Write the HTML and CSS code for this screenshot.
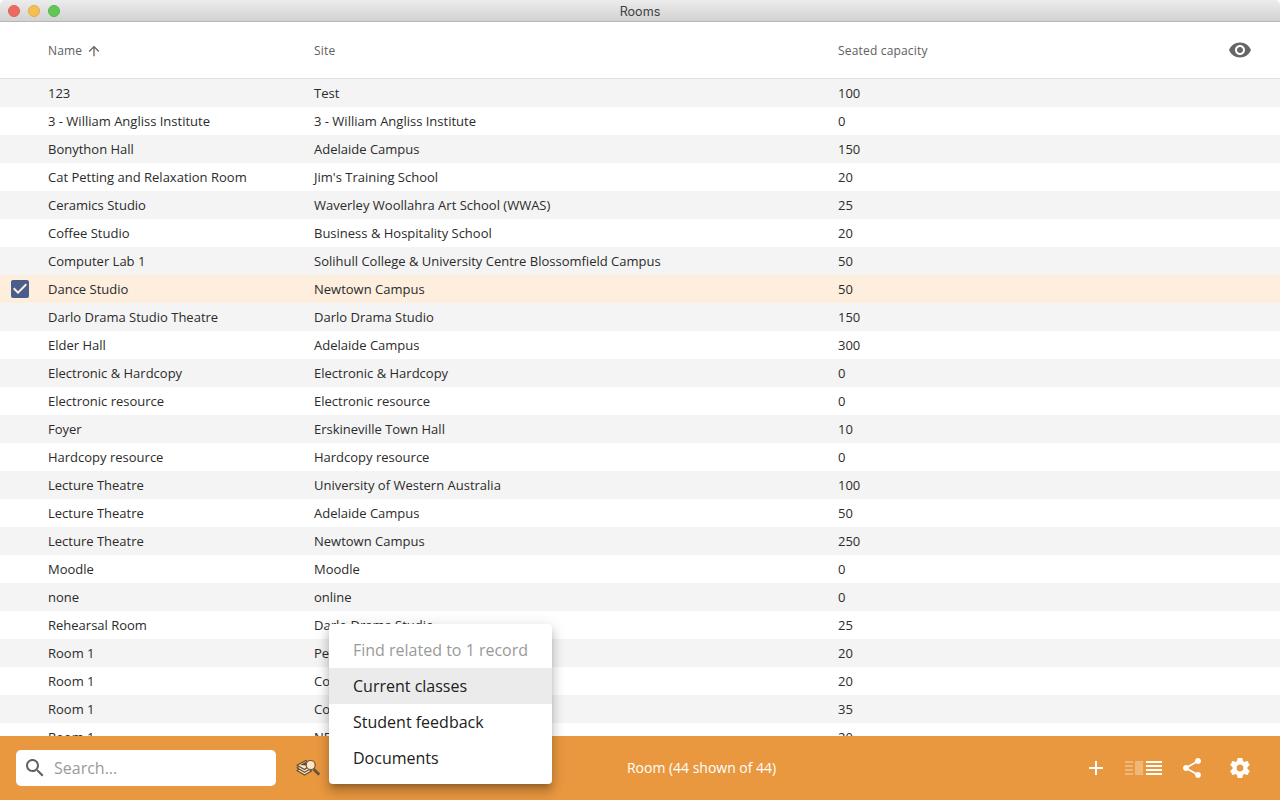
FILE: index.html
```
<!DOCTYPE html>
<html lang="en">
<head>
<meta charset="utf-8">
<title>Rooms</title>
<link rel="stylesheet" href="styles.css">
</head>
<body>
<div class="window">
  <header class="titlebar">
    <div class="lights"><span class="light close"></span><span class="light minimise"></span><span class="light expand"></span></div>
    <div class="title">Rooms</div>
  </header>
  <div class="row head">
    <span></span>
    <span class="sorted">Name <svg class="arrow" viewBox="0 0 24 24"><path d="M4 12l1.41 1.41L11 7.83V20h2V7.83l5.58 5.59L20 12l-8-8-8 8z"/></svg></span>
    <span>Site</span>
    <span>Seated capacity</span>
    <svg class="eye" viewBox="0 0 24 24"><path d="M12 4.5C7 4.500 2.730 7.610 1 12c1.730 4.390 6 7.500 11 7.500s9.270-3.110 11-7.500c-1.730-4.390-6-7.500-11-7.500zM12 17c-2.760 0-5-2.240-5-5s2.240-5 5-5 5 2.240 5 5-2.240 5-5 5zm0-8c-1.660 0-3 1.340-3 3s1.340 3 3 3 3-1.340 3-3-1.340-3-3-3z"/></svg>
  </div>
  <main class="list">
    <div class="row"><span></span><span>123</span><span>Test</span><span>100</span></div>
    <div class="row"><span></span><span>3 - William Angliss Institute</span><span>3 - William Angliss Institute</span><span>0</span></div>
    <div class="row"><span></span><span>Bonython Hall</span><span>Adelaide Campus</span><span>150</span></div>
    <div class="row"><span></span><span>Cat Petting and Relaxation Room</span><span>Jim's Training School</span><span>20</span></div>
    <div class="row"><span></span><span>Ceramics Studio</span><span>Waverley Woollahra Art School (WWAS)</span><span>25</span></div>
    <div class="row"><span></span><span>Coffee Studio</span><span>Business &amp; Hospitality School</span><span>20</span></div>
    <div class="row"><span></span><span>Computer Lab 1</span><span>Solihull College &amp; University Centre Blossomfield Campus</span><span>50</span></div>
    <div class="row selected"><svg class="check" viewBox="0 0 24 24"><path d="M19 3H5c-1.110 0-2 .9-2 2v14c0 1.100.89 2 2 2h14c1.110 0 2-.9 2-2V5c0-1.100-.89-2-2-2zm-9 14l-5-5 1.410-1.410L10 14.170l7.590-7.590L19 8l-9 9z"/></svg><span>Dance Studio</span><span>Newtown Campus</span><span>50</span></div>
    <div class="row"><span></span><span>Darlo Drama Studio Theatre</span><span>Darlo Drama Studio</span><span>150</span></div>
    <div class="row"><span></span><span>Elder Hall</span><span>Adelaide Campus</span><span>300</span></div>
    <div class="row"><span></span><span>Electronic &amp; Hardcopy</span><span>Electronic &amp; Hardcopy</span><span>0</span></div>
    <div class="row"><span></span><span>Electronic resource</span><span>Electronic resource</span><span>0</span></div>
    <div class="row"><span></span><span>Foyer</span><span>Erskineville Town Hall</span><span>10</span></div>
    <div class="row"><span></span><span>Hardcopy resource</span><span>Hardcopy resource</span><span>0</span></div>
    <div class="row"><span></span><span>Lecture Theatre</span><span>University of Western Australia</span><span>100</span></div>
    <div class="row"><span></span><span>Lecture Theatre</span><span>Adelaide Campus</span><span>50</span></div>
    <div class="row"><span></span><span>Lecture Theatre</span><span>Newtown Campus</span><span>250</span></div>
    <div class="row"><span></span><span>Moodle</span><span>Moodle</span><span>0</span></div>
    <div class="row"><span></span><span>none</span><span>online</span><span>0</span></div>
    <div class="row"><span></span><span>Rehearsal Room</span><span>Darlo Drama Studio</span><span>25</span></div>
    <div class="row"><span></span><span>Room 1</span><span>Pe</span><span>20</span></div>
    <div class="row"><span></span><span>Room 1</span><span>Co</span><span>20</span></div>
    <div class="row"><span></span><span>Room 1</span><span>Co</span><span>35</span></div>
    <div class="row"><span></span><span>Room 1</span><span>NE</span><span>20</span></div>
  </main>
  <footer class="toolbar">
    <div class="search">
      <svg viewBox="0 0 24 24"><path d="M15.500 14h-.79l-.28-.27C15.410 12.590 16 11.110 16 9.500 16 5.910 13.090 3 9.500 3S3 5.910 3 9.500 5.910 16 9.500 16c1.610 0 3.090-.59 4.230-1.570l.27.28v.79l5 4.990L20.490 19l-4.990-5zm-6 0C7.010 14 5 11.990 5 9.500S7.010 5 9.500 5 14 7.010 14 9.500 11.990 14 9.500 14z"/></svg>
      <span>Search...</span>
    </div>
    <svg class="related" viewBox="0 0 24 20">
      <g fill="#ffe5c4" stroke="#624c2e" stroke-width="1.200" stroke-linejoin="round"><path d="M1 12.500l7.500 4.500 7-4-7-5z"/><path d="M1 9.800l7.500 4.500 7-4-7-5z"/><path d="M1 7.200l7.500 4.300 6-4.500-4.500-4.500z"/></g>
      <path d="M4 7l6.500-3.500-.5 4z" fill="#624c2e"/>
      <path d="M18 11.500l4.300 4.300" stroke="#66573f" stroke-width="3" stroke-linecap="round"/>
      <circle cx="14.700" cy="7" r="4.500" fill="#ffe5c4" stroke="#66573f" stroke-width="1.200"/>
    </svg>
    <div class="count">Room (44 shown of 44)</div>
    <div class="actions">
      <svg viewBox="0 0 24 24"><path d="M19 13h-6v6h-2v-6H5v-2h6V5h2v6h6v2z"/></svg>
      <svg class="layout" viewBox="0 0 38 14"><path opacity=".3" d="M0 0h8v2H0zm0 4h8v2H0zm0 4h8v2H0zm0 4h8v2H0zM10 0h8v14h-8z"/><path d="M21 0h16v2H21zm0 4h16v2H21zm0 4h16v2H21zm0 4h16v2H21z"/></svg>
      <svg viewBox="0 0 24 24"><path d="M18 16.080c-.76 0-1.440.3-1.960.77L8.910 12.700c.05-.23.09-.46.09-.7s-.04-.47-.09-.7l7.050-4.110c.54.5 1.250.81 2.040.81 1.660 0 3-1.340 3-3s-1.340-3-3-3-3 1.340-3 3c0 .24.04.47.09.7L8.040 9.810C7.500 9.310 6.790 9 6 9c-1.660 0-3 1.340-3 3s1.340 3 3 3c.79 0 1.500-.31 2.040-.81l7.120 4.160c-.05.21-.08.43-.08.65 0 1.610 1.310 2.920 2.920 2.920s2.920-1.310 2.920-2.920-1.310-2.920-2.920-2.920z"/></svg>
      <svg viewBox="0 0 24 24"><path d="M19.430 12.980c.04-.32.07-.64.07-.98s-.03-.66-.07-.98l2.110-1.650c.19-.15.24-.42.12-.64l-2-3.460c-.12-.22-.39-.3-.61-.22l-2.490 1c-.52-.4-1.080-.73-1.690-.98l-.38-2.650C14.460 2.180 14.250 2 14 2h-4c-.25 0-.46.18-.49.42l-.38 2.650c-.61.25-1.170.59-1.690.98l-2.490-1c-.23-.09-.49 0-.61.22l-2 3.460c-.13.22-.07.49.12.64l2.110 1.650c-.04.32-.07.65-.07.98s.03.66.07.98l-2.110 1.650c-.19.15-.24.42-.12.64l2 3.460c.12.22.39.3.61.22l2.490-1c.52.4 1.080.73 1.690.98l.38 2.650c.03.24.24.42.49.42h4c.25 0 .46-.18.49-.42l.38-2.650c.61-.25 1.170-.59 1.690-.98l2.490 1c.23.09.49 0 .61-.22l2-3.460c.12-.22.07-.49-.12-.64l-2.110-1.650zM12 15.500c-1.930 0-3.500-1.570-3.500-3.500s1.570-3.500 3.500-3.500 3.500 1.570 3.500 3.500-1.570 3.500-3.500 3.500z"/></svg>
    </div>
  </footer>
  <div class="menu">
    <div class="item caption">Find related to 1 record</div>
    <div class="item active">Current classes</div>
    <div class="item">Student feedback</div>
    <div class="item">Documents</div>
  </div>
</div>
</body>
</html>
```
FILE: styles.css
```
* { box-sizing: border-box; }
body { margin: 0; background: #fff; font-family: "Open Sans", sans-serif; }
svg { display: block; }
.window { position: relative; width: 1280px; height: 800px; overflow: hidden; display: flex; flex-direction: column; background: #fff; }
.titlebar { height: 22px; flex: none; display: grid; grid-template-columns: 80px 1fr 80px; align-items: center; background: linear-gradient(#ececec, #d2d2d2); border-bottom: 1px solid #b8b8b8; border-radius: 5px 5px 0 0; }
.lights { display: flex; gap: 8px; padding-left: 8px; }
.light { width: 12px; height: 12px; border-radius: 50%; border: 1px solid; }
.close { background: #ee6a5f; border-color: #dc6257; }
.minimise { background: #f6bf50; border-color: #dfad48; }
.expand { background: #62c655; border-color: #58b54b; }
.title { text-align: center; font: 12.6px/20px Inter, sans-serif; color: #404040; padding-top: 2px; }
.row { display: grid; grid-template-columns: 48px 266px 524px 1fr 80px; align-items: center; height: 28px; flex: none; font-size: 13px; line-height: 28px; color: #2b2b2b; white-space: nowrap; }
.row:nth-child(odd) { background: #f4f4f4; }
.list .selected { background: #fdeedd; }
.list { height: 657px; flex: none; overflow: hidden; }
.window > .head { height: 57px; background: #fff; border-bottom: 1px solid #e0e0e0; font-size: 12px; font-weight: 500; letter-spacing: .18px; color: #606060; }
.head span { padding-top: 1px; }
.sorted { display: flex; align-items: center; gap: 4px; }
.arrow { width: 16px; height: 16px; fill: #666; }
.eye { width: 24px; height: 24px; margin-left: 28px; fill: #666; }
.check { width: 24px; height: 24px; margin-left: 8px; fill: #4a5d8c; }
.toolbar { height: 64px; flex: none; display: grid; grid-template-columns: 260px 24px 1fr auto; align-items: center; background: #e9983f; padding: 0 28px 0 16px; column-gap: 20px; }
.search { height: 36px; display: flex; align-items: center; gap: 7px; padding-left: 7px; border-radius: 5px; background: #fff; color: #9a9a9a; font-size: 16px; }
.search span { padding-bottom: 1px; }
.search svg { width: 24px; height: 24px; fill: #616161; }
.related { width: 24px; height: 20px; }
.count { padding-left: 287px; color: #fff; font-size: 14px; letter-spacing: -.02px; line-height: 20px; white-space: nowrap; }
.actions { display: flex; align-items: center; }
.actions svg { width: 24px; height: 24px; fill: #fff; margin-left: 24px; }
.actions .layout { width: 38px; height: 14px; margin-left: 17px; margin-right: -7px; }
.menu { position: absolute; left: 329px; top: 624px; width: 223px; height: 160px; padding: 8px 0; border-radius: 4px; background: #fff; box-shadow: 0 5px 5px -3px rgba(0,0,0,.2), 0 8px 10px 1px rgba(0,0,0,.14), 0 3px 14px 2px rgba(0,0,0,.12); overflow: hidden; }
.item { height: 36px; padding: 0 24px; font-size: 16px; line-height: 36px; color: #212121; white-space: nowrap; }
.caption { color: #9a9a9a; }
.active { background: #ebebeb; }
```
